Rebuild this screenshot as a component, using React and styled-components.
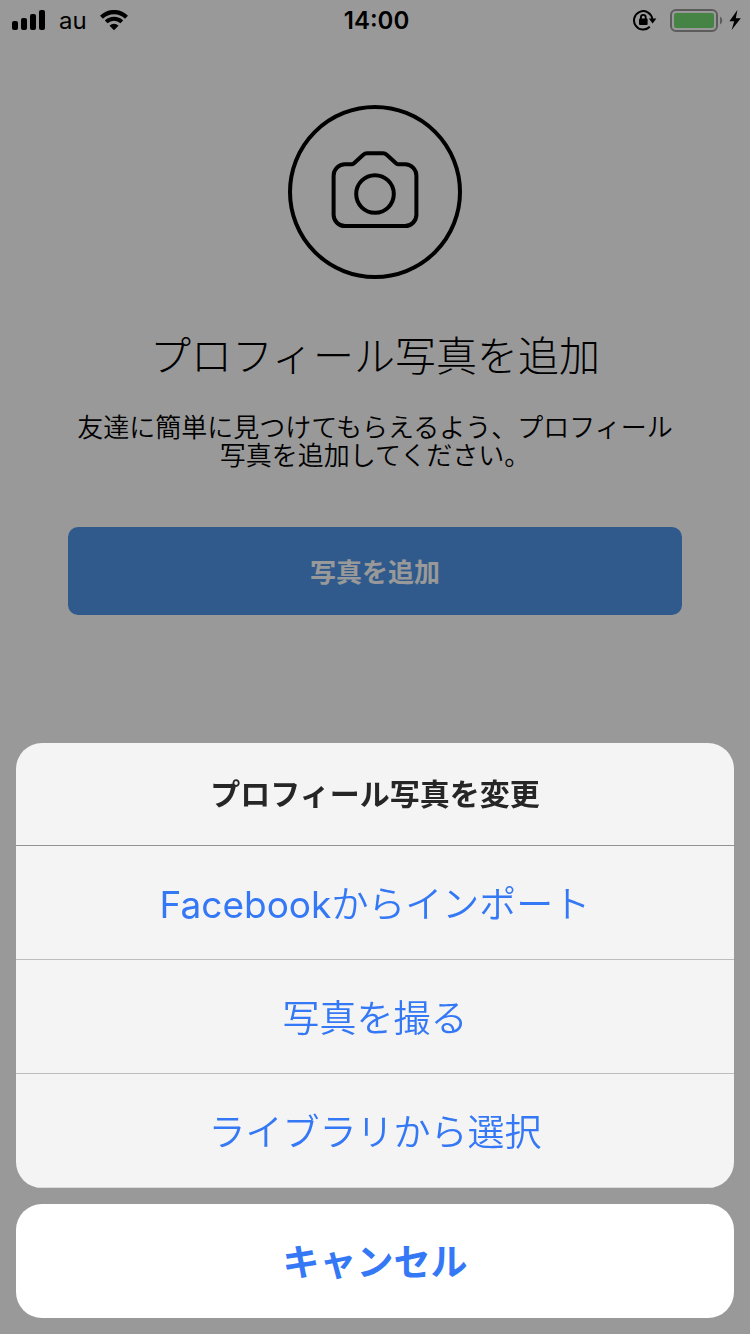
import React from 'react'
import styled, { createGlobalStyle } from 'styled-components'

const GlobalStyle = createGlobalStyle`
    * {
        box-sizing: border-box;
    }
    body {
        margin: 0;
        background-color: #ffffff;
        font-family: 'Inter', 'Noto Sans CJK JP', sans-serif;
    }
    button {
        font-family: inherit;
        border: none;
        cursor: pointer;
    }
`

const Page = styled.div`
    min-height: 100vh;
    color: #000000;
`

const StatusBar = styled.header`
    display: grid;
    grid-template-columns: 1fr auto 1fr;
    align-items: center;
    height: 42px;
    padding: 0 9px 0 12px;
`

const StatusGroup = styled.div`
    display: flex;
    align-items: center;
    justify-content: ${props => props.$end ? 'flex-end' : 'flex-start'};
    gap: 13px;
`

const Carrier = styled.span`
    font-size: 24px;
    line-height: 28px;
`

const Clock = styled.time`
    font-size: 24px;
    line-height: 28px;
    font-weight: 600;
`

const Power = styled.div`
    display: flex;
    align-items: center;
    gap: 6px;
`

const Main = styled.main`
    display: flex;
    flex-direction: column;
    align-items: center;
    padding: 63px 68px 0;
    text-align: center;
`

const PhotoCircle = styled.div`
    display: flex;
    align-items: center;
    justify-content: center;
    width: 174px;
    height: 174px;
    border: 4px solid #000000;
    border-radius: 50%;
`

const Heading = styled.h1`
    margin: 47px 0 28px;
    font-size: 41px;
    line-height: 60px;
    font-weight: 300;
`

const Description = styled.p`
    margin: 0 0 57px;
    font-size: 26px;
    line-height: 28px;
    font-weight: 350;
`

const AddButton = styled.button`
    width: 100%;
    height: 88px;
    padding: 0 0 2px;
    border-radius: 10px;
    background-color: #5296e9;
    color: #ffffff;
    font-size: 26px;
    font-weight: 700;
`

const Overlay = styled.div`
    position: fixed;
    inset: 0;
    display: flex;
    flex-direction: column;
    justify-content: flex-end;
    gap: 16px;
    padding: 16px;
    background-color: rgba(0, 0, 0, 0.4);
`

const Sheet = styled.section`
    border-radius: 26px;
    background-color: #f4f4f4;
    overflow: hidden;
`

const SheetTitle = styled.h2`
    display: flex;
    align-items: center;
    justify-content: center;
    height: 103px;
    margin: 0;
    padding-bottom: 4px;
    border-bottom: 1px solid #929292;
    color: #262626;
    font-size: 30px;
    font-weight: 700;
`

const SheetButton = styled.button`
    display: block;
    width: 100%;
    height: 114px;
    padding: 0 0 2px;
    background-color: transparent;
    color: #3478f6;
    font-size: 37px;
    font-weight: 350;
    && {
        border-bottom: 1px solid ${props => props.$last ? '#dadada' : '#bcbcbc'};
    }
`

const Latin = styled.span`
    font-weight: 400;
`

const CancelButton = styled.button`
    width: 100%;
    height: 114px;
    padding: 0 0 2px;
    border-radius: 26px;
    background-color: #ffffff;
    color: #3478f6;
    font-size: 37px;
    font-weight: 700;
`

const actions = [
    { id: 'facebook', latin: 'Facebook', label: 'からインポート' },
    { id: 'camera', label: '写真を撮る' },
    { id: 'library', label: 'ライブラリから選択' },
]

function SignalIcon() {
    return (
        <svg width="34" height="22" viewBox="0 0 34 22" aria-hidden="true">
            <rect x="0" y="11" width="6" height="9" rx="2" />
            <rect x="9" y="8" width="6" height="12" rx="2" />
            <rect x="18" y="4" width="6" height="16" rx="2" />
            <rect x="27" y="0" width="6" height="20" rx="2" />
        </svg>
    )
}

function WifiIcon() {
    return (
        <svg width="28" height="22" viewBox="0 0 28 22" aria-hidden="true">
            <path d="M1.500 7.200a17.700 17.700 0 0 1 25 0" fill="none" stroke="#000" strokeWidth="4.2" />
            <path d="M6.200 11.900a11.200 11.200 0 0 1 15.600 0" fill="none" stroke="#000" strokeWidth="4" />
            <path d="M14 20.200l-4.500-4.500a6.300 6.300 0 0 1 9 0z" />
        </svg>
    )
}

function RotationLockIcon() {
    return (
        <svg width="24" height="22" viewBox="0 0 24 22" aria-hidden="true">
            <path d="M16.800 16.800A9.200 9.200 0 1 1 19.300 8.800" fill="none" stroke="#000" strokeWidth="2" />
            <path d="M15.800 8.600h7.600l-3.800 5z" />
            <rect x="6" y="8.500" width="8.600" height="6.600" rx="1" />
            <path d="M7.900 9.200V7.200a2.400 2.400 0 0 1 4.800 0v2" fill="none" stroke="#000" strokeWidth="1.8" />
        </svg>
    )
}

function BatteryIcon() {
    return (
        <svg width="53" height="24" viewBox="0 0 53 24" aria-hidden="true">
            <rect x="1" y="1" width="46" height="21" rx="5" fill="none" stroke="#999999" strokeWidth="2" />
            <rect x="4" y="4" width="40" height="15" rx="2" fill="#75dc75" />
            <path d="M50 7.500a4.600 4.600 0 0 1 0 8z" fill="#999999" />
        </svg>
    )
}

function BoltIcon() {
    return (
        <svg width="12" height="22" viewBox="0 0 12 22" aria-hidden="true">
            <path d="M8.400 0L0.400 11.200h4.800L2.600 20l9.200-11.800H6.800z" />
        </svg>
    )
}

function CameraIcon() {
    return (
        <svg width="88" height="82" viewBox="0 0 88 82" fill="none" stroke="#000" strokeWidth="4" strokeLinejoin="round" aria-hidden="true">
            <path d="M14 13.300h6.500c1.200 0 1.900-.6 2.800-1.400l8.700-7.900c1.200-1.100 2.200-1.800 4-1.800h16c1.800 0 2.800.7 4 1.800l8.700 7.900c.9.8 1.600 1.400 2.800 1.400H74a11.400 11.400 0 0 1 11.400 11.400v39A11.400 11.400 0 0 1 74 75.100H14A11.400 11.400 0 0 1 2.600 63.700v-39A11.400 11.400 0 0 1 14 13.300z" />
            <circle cx="44" cy="43" r="18.800" />
        </svg>
    )
}

function App() {
    return (
        <Page>
            <GlobalStyle />
            <StatusBar>
                <StatusGroup>
                    <SignalIcon />
                    <Carrier>au</Carrier>
                    <WifiIcon />
                </StatusGroup>
                <Clock>14:00</Clock>
                <StatusGroup $end>
                    <RotationLockIcon />
                    <Power>
                        <BatteryIcon />
                        <BoltIcon />
                    </Power>
                </StatusGroup>
            </StatusBar>

            <Main>
                <PhotoCircle>
                    <CameraIcon />
                </PhotoCircle>
                <Heading>プロフィール写真を追加</Heading>
                <Description>友達に簡単に見つけてもらえるよう、プロフィール写真を追加してください。</Description>
                <AddButton type="button">写真を追加</AddButton>
            </Main>

            <Overlay>
                <Sheet role="dialog" aria-labelledby="sheet-title">
                    <SheetTitle id="sheet-title">プロフィール写真を変更</SheetTitle>
                    {actions.map((action, i) => (
                        <SheetButton key={action.id} type="button" $last={i === actions.length - 1}>
                            {action.latin && <Latin>{action.latin}</Latin>}
                            {action.label}
                        </SheetButton>
                    ))}
                </Sheet>
                <CancelButton type="button">キャンセル</CancelButton>
            </Overlay>
        </Page>
    )
}

export default App
